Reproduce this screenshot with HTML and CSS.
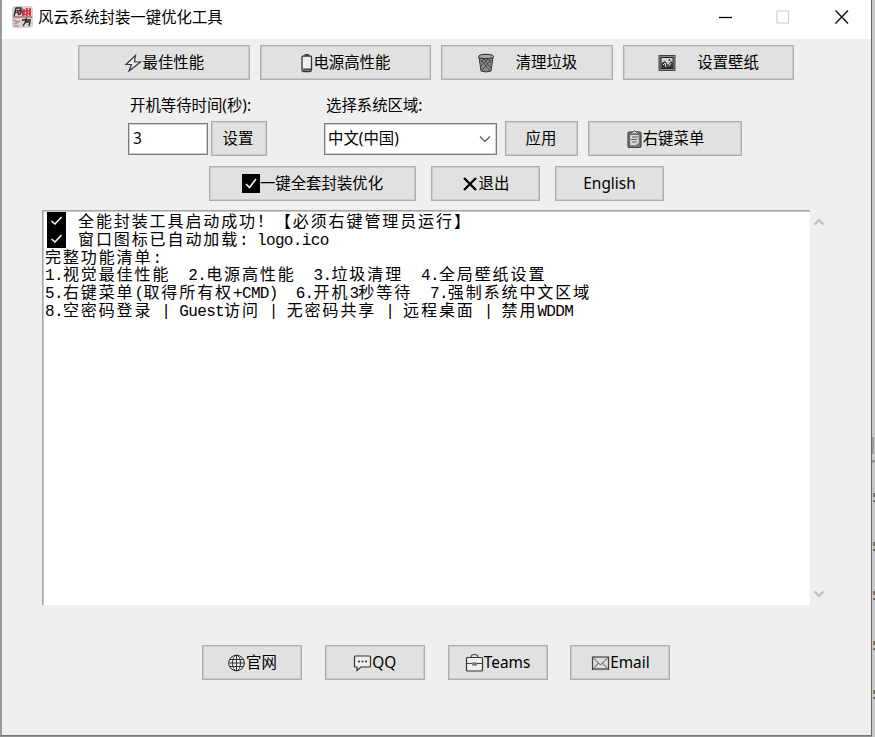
FILE: index.html
```html
<!DOCTYPE html>
<html lang="zh-CN">
<head>
<meta charset="utf-8">
<title>风云系统封装一键优化工具</title>
<link rel="stylesheet" href="styles.css">
</head>
<body>
<main class="window">
  <header class="titlebar">
    <svg class="app-icon" width="21" height="22" viewBox="0 0 21 22">
      <rect width="21" height="22" rx="3" fill="#d9d3d3"/>
      <path d="M2 10L4 2H9L8 9M5 4L7 9M3 7L8 4" fill="none" stroke="#3b2024" stroke-width="1.4"/>
      <path d="M12 3v6M15 2v8M18 2v8M11 9l8-2M11 5h8" fill="none" stroke="#df2931" stroke-width="1.7"/>
      <path d="M8 9l2-5 1 6M1 11h19" fill="none" stroke="#873c42" stroke-width="1.2"/>
      <path d="M10 14h9M14 12v3l-3 5M14 16h4l-1 4" fill="none" stroke="#252323" stroke-width="1.3"/>
      <path d="M1 14l6 2M2 18l6-3M2 20h5" fill="none" stroke="#c58c9e" stroke-width="1.6"/>
    </svg>
    <h1 class="title">风云系统封装一键优化工具</h1>
    <svg class="controls" width="134" height="16" viewBox="0 0 134 16">
      <path d="M1 9.5H14" stroke="#000" stroke-width="1.3"/>
      <rect x="59" y="3" width="11.5" height="12" fill="none" stroke="#d0d0d0" stroke-width="1.2"/>
      <path d="M117.500 2.500L130 15.500M130 2.500L117.500 15.500" stroke="#111" stroke-width="1.4"/>
    </svg>
  </header>

  <div class="row tools">
    <button class="btn"><svg width="19" height="20" viewBox="0 0 19 20"><path d="M11.500 2.500L2 11.500H7.500L5 18L16.500 9H10.500Z" fill="#eee" stroke="#30343c" stroke-width="1.2"/></svg>最佳性能</button>
    <button class="btn"><svg width="13" height="20" viewBox="0 0 13 20"><rect x="2" y="3" width="9.500" height="15.500" rx="1.500" fill="#eee" stroke="#303640" stroke-width="1.3"/><path d="M4.500 2H9M3 16.500h8" stroke="#444" stroke-width="1.800"/></svg>电源高性能</button>
    <button class="btn spaced"><svg width="18" height="20" viewBox="0 0 18 20"><path d="M2 4L4 18q5 2 10 0L16 4" fill="#8b8b8b" stroke="#333"/><ellipse cx="9" cy="3.500" rx="7.500" ry="2.200" fill="#aaa" stroke="#222"/><path d="M4 7l9 11M7 6l7 9M11 6l3 4M14 7L5 17M11 6l-7 7M7 6l-3 3" stroke="#333" stroke-width=".8"/></svg>清理垃圾</button>
    <button class="btn spaced"><svg width="18" height="18" viewBox="0 0 18 18"><rect x="1" y="1.500" width="16" height="15" fill="#8a8d90" stroke="#444"/><rect x="3" y="3.500" width="12" height="11" fill="#d5d5d5" stroke="#222"/><path d="M3.500 14V9L7 7L10 11L13 7L15 9V14Z" fill="#333"/><path d="M5 11l2-2 1 4M11 12l2-3" stroke="#eee" fill="none"/><circle cx="11.500" cy="6" r="1" fill="#333"/></svg>设置壁纸</button>
  </div>

  <div class="row settings">
    <section class="field wait">
      <label>开机等待时间(秒):</label>
      <div class="line"><span class="input">3</span><button class="btn">设置</button></div>
    </section>
    <section class="field region">
      <label>选择系统区域:</label>
      <div class="line">
        <span class="input">中文(中国)<svg width="12" height="8" viewBox="0 0 12 8"><path d="M1 1.500L6 6.500L11 1.500" fill="none" stroke="#555" stroke-width="1.200"/></svg></span>
        <button class="btn apply">应用</button>
        <button class="btn menu"><svg width="17" height="20" viewBox="0 0 17 20"><rect x="2" y="3" width="13" height="15.500" rx="1.500" fill="#777" stroke="#444" stroke-width="1.200"/><path d="M4 5.500h9v8l-3 3H4z" fill="#ddd" stroke="#666" stroke-width=".6"/><path d="M5 5V3h2q1.500-3 3 0h2v2zM6 8h6M5 10.500h6M6 13h5" fill="#c5d9e1" stroke="#555"/></svg>右键菜单</button>
      </div>
    </section>
  </div>

  <div class="row actions">
    <button class="btn all"><svg width="18" height="19" viewBox="0 0 18 19"><path fill="#000" d="M0 0h18v19H0z"/><path d="M4 10l3.500 3.500L14 5" fill="none" stroke="#fff" stroke-width="1.500"/></svg><span>一键全套封装优化</span></button>
    <button class="btn exit"><svg width="17" height="16" viewBox="0 0 17 16"><path d="M2 2L14 14M14 2L2 14" stroke="#000" stroke-width="2.300"/></svg>退出</button>
    <button class="btn english">English</button>
  </div>

  <div class="output">
    <div class="log">
      <p><svg class="check" width="19" height="18" viewBox="0 0 19 18"><path fill="#000" d="M0 0h19v18H0z"/><path d="M4.500 9l3.500 3L14.500 5" fill="none" stroke="#fff" stroke-width="1.500"/></svg>全能封装工具启动成功！【必须右键管理员运行】</p>
      <p><svg class="check" width="19" height="18" viewBox="0 0 19 18"><path fill="#000" d="M0 0h19v18H0z"/><path d="M4.500 9l3.500 3L14.500 5" fill="none" stroke="#fff" stroke-width="1.500"/></svg>窗口图标已自动加载<i>: logo.ico</i></p>
      <p>完整功能清单<i>:</i></p>
      <p><i>1.</i>视觉最佳性能<i>  2.</i>电源高性能<i>  3.</i>垃圾清理<i>  4.</i>全局壁纸设置</p>
      <p><i>5.</i>右键菜单<i>(</i>取得所有权<i>+CMD)  6.</i>开机<i>3</i>秒等待<i>  7.</i>强制系统中文区域</p>
      <p><i>8.</i>空密码登录<i> | Guest</i>访问<i> | </i>无密码共享<i> | </i>远程桌面<i> | </i>禁用<i>WDDM</i></p>
    </div>
    <div class="scrollbar">
      <svg width="12" height="10" viewBox="0 0 12 10"><path d="M1.500 7.500L6 3L10.500 7.500" fill="none" stroke="#bfbfbf" stroke-width="2.200"/></svg>
      <svg width="12" height="10" viewBox="0 0 12 10"><path d="M1.500 2.500L6 7L10.500 2.500" fill="none" stroke="#bfbfbf" stroke-width="2.200"/></svg>
    </div>
  </div>

  <footer class="row links">
    <button class="btn"><svg width="19" height="20" viewBox="0 0 19 20"><circle cx="9.500" cy="10" r="7.800" fill="#eee" stroke="#222"/><path d="M9.500 2v16M2 10h15M3 6.500h13M3 13.500h13" stroke="#333"/><ellipse cx="9.500" cy="10" rx="4" ry="7.800" fill="none" stroke="#333"/></svg>官网</button>
    <button class="btn"><svg width="19" height="20" viewBox="0 0 19 20"><path d="M2.500 3h14q1 0 1 1v9q0 1-1 1H8l-4 3.500V14H2.500q-1 0-1-1V4q0-1 1-1z" fill="#eee" stroke="#333" stroke-width="1.200"/><path d="M5 8.500h2m1.500 0h2m1.500 0h2" stroke="#333" stroke-width="1.500"/></svg>QQ</button>
    <button class="btn"><svg width="19" height="20" viewBox="0 0 19 20"><rect x="1.500" y="4.500" width="16" height="13.500" rx="1" fill="#eee" stroke="#333" stroke-width="1.200"/><path d="M6 4Q6 1.500 9.500 1.500T13 4M2 10.500h5m5 0h5M8 10h3v2H8z" fill="none" stroke="#444" stroke-width="1.200"/></svg>Teams</button>
    <button class="btn"><svg width="19" height="20" viewBox="0 0 19 20"><rect x="1.500" y="4" width="16" height="12.500" fill="#ddd" stroke="#444" stroke-width="1.200"/><path d="M2 4.500l7.500 7.500L17 4.500M2 16l5.500-6M17 16l-5.500-6" fill="none" stroke="#555"/><path d="M2 16h15" stroke="#777" stroke-width="2"/></svg>Email</button>
  </footer>
</main>
<svg class="edge" width="3" height="737" viewBox="0 0 3 737">
  <path d="M0 0h3v737H0z" fill="#c8c8c8"/>
  <path d="M1 437v17M0 461h3M0 462h2" stroke="#777" fill="none"/>
  <path d="M2 493v4M2 542v4M2 591v4M2 641v4M2 690v4" stroke="#8b775b" stroke-width="2"/>
  <path d="M2 500v2M2 549v2M2 598v2M2 648v2M2 697v2" stroke="#6d7478" stroke-width="2"/>
</svg>
</body>
</html>
```

FILE: styles.css
```css
* { box-sizing: border-box; }

body {
  margin: 0;
  width: 875px;
  height: 737px;
  display: flex;
  overflow: hidden;
  background: #929292;
  color: #000;
  font: 15.4px/20px "Noto Sans", "Noto Sans CJK SC", sans-serif;
}

.window {
  width: 872px;
  height: 736px;
  border: solid #999;
  border-width: 0 1px 1px 2px;
  border-right-color: #666;
  border-bottom-color: #777;
  background: #efefef;
}

.edge { flex: none; }
svg { display: block; flex: none; }

.titlebar {
  height: 39px;
  padding: 6px 19px 0 10px;
  display: flex;
  align-items: flex-start;
  background: #fff;
}

.title {
  flex: 1;
  margin: 2px 0 0 5px;
  font-size: 15.4px;
  font-weight: 400;
}

.controls { margin-top: 2px; }

.row { display: flex; }

.btn {
  height: 35px;
  padding: 0;
  display: flex;
  align-items: center;
  justify-content: center;
  border: 1px solid #adadad;
  box-shadow: inset 0 0 0 1px #cbcbcb;
  background: #e1e1e1;
  color: #000;
  font: inherit;
  white-space: nowrap;
}

.tools {
  gap: 10px;
  padding: 6px 0 0 76px;
}

.tools .btn { width: 171.6px; padding-top: 1px; }
.spaced svg { margin-right: 21px; }

.settings { padding: 16px 0 0 126px; }
.field label { display: block; height: 25px; padding-left: 2px; }
.region { margin-left: 57px; }
.line { display: flex; align-items: center; }

.input {
  width: 80px;
  height: 32px;
  padding: 0 5px 0 4px;
  display: flex;
  align-items: center;
  justify-content: space-between;
  border: 1px solid #7a7a7a;
  box-shadow: inset 0 0 0 1px #d0d0d0;
  background: #fff;
}

.region .input { width: 173px; padding-left: 3px; }
.wait .btn { width: 56px; margin-left: 3px; padding-right: 2px; }
.apply { width: 73px; margin-left: 8px; padding-right: 1px; }
.menu { width: 154px; margin-left: 10px; }

.actions { gap: 15px; padding: 10px 0 0 207px; }
.all { width: 207px; }
.exit, .english { width: 109px; }

.output {
  height: 395px;
  margin: 9px 0 0 40px;
  display: flex;
}

.log {
  width: 768px;
  padding: 4px 0 0 2px;
  border: solid #a5a5a5;
  border-width: 1px 0 0 1px;
  box-shadow: inset 1px 1px 0 #c9c9c9;
  background: #fff;
  font: 16px/17.8px "Liberation Mono", "Noto Sans CJK SC", monospace;
  letter-spacing: 1.9px;
}

.log p {
  height: 17.8px;
  margin: 0;
  display: flex;
  align-items: flex-start;
  white-space: pre;
}

.log i {
  font-style: normal;
  letter-spacing: -0.65px;
  white-space: pre;
}

.check { margin: -3px 12px 0 2px; }

.scrollbar {
  width: 20px;
  padding: 7px 0 6px 3px;
  display: flex;
  flex-direction: column;
  justify-content: space-between;
}

.links { gap: 22.8px; padding: 40px 0 0 200px; }
.links .btn { width: 100px; }
```
